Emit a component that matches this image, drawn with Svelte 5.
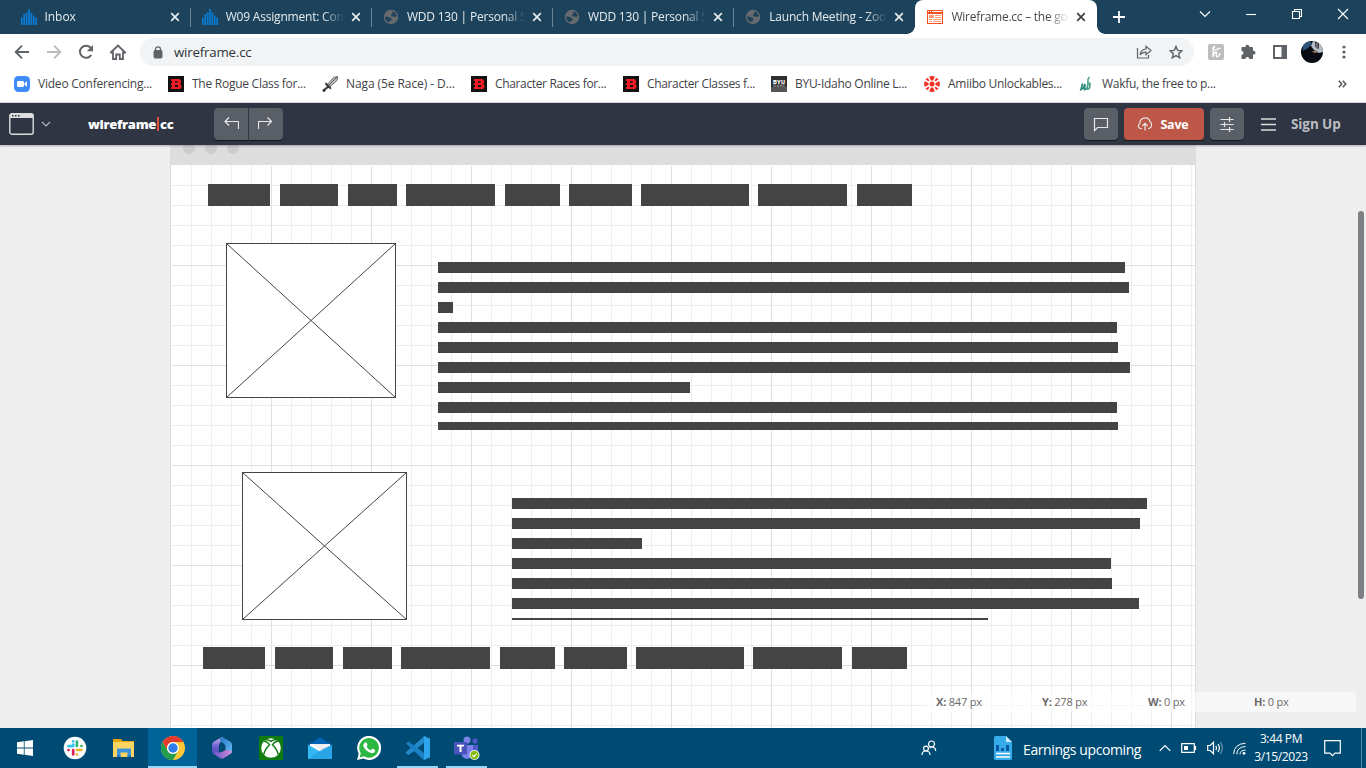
<script>
  const tabs = [
    { title: 'Inbox', icon: 'bars', s: -0.05 },
    { title: 'W09 Assignment: Complete', icon: 'bars', s: -0.2 },
    { title: 'WDD 130 | Personal Site', icon: 'globe', s: -0.2 },
    { title: 'WDD 130 | Personal Site', icon: 'globe', s: -0.2 },
    { title: 'Launch Meeting - Zoom', icon: 'globe', s: -0.2 },
    { title: 'Wireframe.cc – the go-to', icon: 'wire', active: true, s: -0.25 }
  ];
  const bookmarks = [
    { t: 'Video Conferencing...', i: 'zoom', w: 154, s: -0.22 },
    { t: 'The Rogue Class for...', i: 'b', w: 154, s: -0.26 },
    { t: 'Naga (5e Race) - D...', i: 'sword', w: 149, s: -0.08 },
    { t: 'Character Races for...', i: 'b', w: 152, s: -0.35 },
    { t: 'Character Classes f...', i: 'b', w: 148, s: -0.35 },
    { t: 'BYU-Idaho Online L...', i: 'byu', w: 153, s: -0.28 },
    { t: 'Amiibo Unlockables...', i: 'ign', w: 154, s: -0.28 },
    { t: 'Wakfu, the free to p...', i: 'wakfu', w: 150, s: -0.28 }
  ];
  const nav = [[0, 62], [72, 58], [140, 49], [198, 89], [297, 55], [361, 63], [433, 108], [550, 89], [649, 55]];
  const paraA = [687, 691, 15, 679, 680, 692, 252, 679, 680];
  const paraB = [635, 628, 130, 599, 600, 627, 476];
  const coords = [['X:', '847 px'], ['Y:', '278 px'], ['W:', '0 px'], ['H:', '0 px']];
  const apps = ['start', 'slack', 'files', 'chrome', 'm365', 'xbox', 'mail', 'whatsapp', 'code', 'teams'];
</script>

{#snippet icon(name)}
  {#if name === 'bars'}
    <svg width="16" height="16" viewBox="0 0 16 16" fill="#0b7ad1"><path d="M0 8.5h1.7V16H0zM2.4 5h1.7v11H2.4zM4.8 3.5h1.7V16H4.8zM7.1 0h1.8v16H7.1zM9.5 3.5h1.7V16H9.5zM11.9 6.5h1.7V16h-1.7zM14.3 8.5H16V16h-1.7z" /></svg>
  {:else if name === 'globe'}
    <svg width="16" height="16" viewBox="0 0 16 16"><circle cx="8" cy="8" r="7.200" fill="#676b6f" /><path d="M2 7.500l3 .2 2.200 1.100 1.600 1-.6 1.600-1.700.5-.3 1.600C3.700 12.500 2 10.500 2 7.500zM9 2.200l3.200 1.300 1.600 3.300-1.500 1.400-1.800-.9-1.700.5L8 6.500l.4-1.400 1.200-.6z" fill="#1d4259" /></svg>
  {:else if name === 'wire'}
    <svg width="16" height="14" viewBox="0 0 16 14"><path fill="#f4511e" d="M0 0h16v14H0z" /><path fill="#fff" d="M1 1h1v1H1zM3 1h1v1H3zM5 1h10v1H5zM1 4h14v9H1z" /><path fill="#ff9c73" d="M2 5h5v3H2zM8 5h6v1H8zM8 7h6v1H8zM2 9h3v1H2zM6 9h8v1H6zM2 11h3v1H2zM6 11h8v1H6z" /></svg>
  {:else if name === 'zoom'}
    <svg width="16" height="16" viewBox="0 0 16 16"><rect width="16" height="16" rx="4.500" fill="#3f8cf7" /><rect x="3" y="5" width="7" height="6" rx="1.300" fill="#fff" /><path d="M10.500 7.200 13 5.300v5.400l-2.500-1.900z" fill="#fff" /></svg>
  {:else if name === 'b'}
    <svg width="16" height="16" viewBox="0 0 16 16"><path fill="#111" d="M0 0h16v16H0z" /><path fill="#ed1c24" fill-rule="evenodd" d="M3 3h8.500L13 4.500v2L12.200 8l1.300 1.500v2.200L12 13H3v-2h1V9H2.500V7.500H4V5H3zM7 5.200v1.600h2.500V5.200zM7 9v2h3V9z" /></svg>
  {:else if name === 'sword'}
    <svg width="16" height="16" viewBox="0 0 16 16"><path d="M15.700.4 15 4.500 7.600 11 5.300 8.700l6.200-7.300z" fill="#bcbcbc" stroke="#555" stroke-width=".8" /><path d="M15 1 6.500 9.500" stroke="#666" /><path d="m3 6.500 1.800.5L9 11.200l.2 2.300-2-1L3.500 9zM5 10.300l1.500 1.500L2.500 15 1 13.700z" fill="#3c3a38" /><circle cx="2" cy="14.500" r="1.400" fill="#2e2d2c" /></svg>
  {:else if name === 'byu'}
    <svg width="16" height="16" viewBox="0 0 16 16"><path fill="#303030" d="M0 0h16v16H0z" /><path fill="#555" d="M0 11h16v5H0z" /><text x="8" y="7.800" text-anchor="middle" font-family="Roboto" font-weight="900" font-size="6" fill="#fff" textLength="12">BYU</text><text x="8" y="11.300" text-anchor="middle" font-family="Roboto" font-size="3.500" fill="#ccc" textLength="12">IDAHO</text></svg>
  {:else if name === 'ign'}
    <svg width="16" height="16" viewBox="0 0 16 16" fill="#ee3124"><circle cx="8" cy="8" r="2.500" /><path d="M5.300.8Q8-.6 10.700.8L9.100 4.500H6.900zM5.300 15.200q2.700 1.400 5.400 0l-1.600-3.700H6.900zM.8 5.300Q-.6 8 .8 10.700l3.700-1.600V6.900zM15.200 5.300q1.400 2.700 0 5.400l-3.700-1.600V6.900z" /><path d="m2 3.500 1.500-1.500L5 4.800 4.800 5zM14 3.500 12.500 2 11 4.800l.2.200zM2 12.500 3.500 14 5 11.200l-.2-.2zM14 12.500 12.500 14 11 11.200l.2-.2z" stroke="#ee3124" stroke-width=".8" /></svg>
  {:else if name === 'wakfu'}
    <svg width="16" height="16" viewBox="0 0 16 16" fill="none" stroke-linecap="round"><path d="M4.500 8 3 13.500 5.500 12 7 8l-.5 5.500L9 12.800" stroke="#2b8a7c" stroke-width="1.700" /><path d="M11 1.500C8.500 4 10.500 7 10 8.500L8.700 13c2.800 1 3.600-2.700 3.100-6" stroke="#4da08a" stroke-width="1.700" /></svg>
  {:else if name === 'start'}
    <svg width="16" height="16" viewBox="0 0 16 16" fill="#fff"><path d="M0 2.300 6.800 1.300v6.200H0zM7.600 1.200 16 0v7.500H7.600zM0 8.400h6.800v6.300L0 13.700zM7.600 8.400H16V16l-8.400-1.200z" /></svg>
  {:else if name === 'slack'}
    <svg width="24" height="24" viewBox="0 0 24 24"><circle cx="12" cy="12" r="11.300" fill="#fff" /><g stroke-width="2.700" stroke-linecap="round"><path d="M10.200 5.300v.2M10.200 8.600v1.300M5.500 10.100h4.600" stroke="#36c5f0" /><path d="M13.900 5.500V10M18.400 10h.1" stroke="#2eb67d" /><path d="M13.900 18.600v-.1M13.900 14h4.600" stroke="#ecb22e" /><path d="M10.200 18.500V14M5.500 14h.1" stroke="#e01e5a" /></g></svg>
  {:else if name === 'files'}
    <svg width="24" height="24" viewBox="0 0 24 24"><path fill="#e5a50f" d="M1 3h8l1.500 2H22v3H1z" /><path fill="#fcd462" d="M1 6h21v15H1z" /><path fill="#3d93dd" d="M5 12.500h14V21h-3.500v-4.500h-7V21H5z" /><path fill="#237ac4" d="M5 19h3.500v2H5zM15.500 19H19v2h-3.500z" /></svg>
  {:else if name === 'chrome'}
    <svg width="24" height="24" viewBox="0 0 24 24"><circle cx="12" cy="12" r="12" fill="#fcc934" /><path d="M1.600 6A12 12 0 0 1 22.400 6H12a6 6 0 0 0-5.200 9z" fill="#e33b2e" /><path d="M1.600 6A12 12 0 0 0 12 24l5.200-9a6 6 0 0 1-10.400 0z" fill="#229c4f" /><circle cx="12" cy="12" r="6" fill="#fff" /><circle cx="12" cy="12" r="4.700" fill="#2f7de9" /></svg>
  {:else if name === 'm365'}
    <svg width="24" height="24" viewBox="0 0 24 24"><defs><linearGradient id="mA" x1="0" y1="0" x2="0" y2="1"><stop stop-color="#d8b4ee" /><stop offset=".5" stop-color="#6c5fd0" /><stop offset="1" stop-color="#4a42ad" /></linearGradient><linearGradient id="mB" x1="0" y1="0" x2="1" y2="1"><stop stop-color="#2877c9" /><stop offset="1" stop-color="#63bdf2" /></linearGradient><linearGradient id="mC"><stop stop-color="#6a55cc" /><stop offset="1" stop-color="#d28ad8" /></linearGradient></defs><path d="M12 1 4 5.500Q2 6.700 2 9v6q0 2 2 3.200L7 20q2 0 2-3V9q0-2 2-3.200L14.500 3Z" fill="url(#mA)" /><path d="M10 2q2-1.300 4 0l6 3.500q2 1.200 2 3.500v6q0 2-2 3.200l-5-3V10q0-2-2-3l-3-1.800Z" fill="url(#mB)" /><path d="m3 17.500 7 4.500q2 1 4 0l6-3.800q2-1.200 2-3.200l-7-1.500L11 16q-2 1-4 0l-2-1z" fill="url(#mC)" /><path d="m12 8 3.500 2v4L12 16l-3-1.700V9.700z" fill="#004b73" /></svg>
  {:else if name === 'xbox'}
    <svg width="24" height="24" viewBox="0 0 24 24"><rect width="24" height="24" rx="1.500" fill="#107c10" /><circle cx="12" cy="12" r="9.800" fill="#fff" /><path d="M4.900 5.200Q8 5 10.600 8.800 5.800 13.500 4.700 18.700M19.100 5.200Q16 5 13.400 8.800 18.200 13.500 19.300 18.700M6.500 3.800Q9.500 3.300 12 5.300q2.500-2 5.500-1.500" fill="none" stroke="#107c10" stroke-width="1.500" /></svg>
  {:else if name === 'mail'}
    <svg width="24" height="24" viewBox="0 0 24 24"><path fill="#0563b6" d="M0 9 12 1l12 8v5H0z" /><path fill="#fff" d="M2 8h20v8H2z" /><path fill="#ddd" d="M5 8h17l-9 7z" opacity=".5" /><path fill="#34b8f2" d="m0 8.500 12 7 12-7V23H0z" /><path fill="#198ed8" d="m0 23 12-8.500 4-2.300L24 8.500V23z" opacity=".45" /></svg>
  {:else if name === 'whatsapp'}
    <svg width="24" height="24" viewBox="0 0 24 24"><path d="m0 24 1.700-6.200A12 12 0 1 1 6.300 22.400z" fill="#fff" /><path d="m2.600 21.400 1.200-4.200A9.800 9.800 0 1 1 7 20.300z" fill="#2bb741" /><path d="M8 6.500c.6-.4 1.400-.4 1.700.3l.8 1.900c.1.400 0 .7-.9 1.700 1 2 2.300 3.100 4.300 3.900l1.200-1.400c.3-.3.6-.2 2.700.9.500.3.300 1.500-.1 2.100-.8 1-2.300 1.400-3.600 1-4.100-1.200-6.700-3.800-7.700-6.700-.5-1.500.4-3 1.600-3.700" fill="#fff" /></svg>
  {:else if name === 'code'}
    <svg width="24" height="24" viewBox="0 0 24 24"><path d="m18 0 6 2.700v18.600L18 24 8.500 14.800 2.500 19 0 17.500v-1.600L14.500 3.500zM18 6.700 11.500 12 18 17.300z" fill="#2489ca" fill-rule="evenodd" /><path d="m0 7.500 2.500-1.900L18 17.300V24l-1-.5z" fill="#1b7fc4" /><path d="m18 0 6 2.700v18.600L18 24z" fill="#2ca5ec" /></svg>
  {:else if name === 'teams'}
    <svg width="26" height="24" viewBox="0 0 26 24"><circle cx="13" cy="4" r="3.500" fill="#7b83eb" /><circle cx="21" cy="5" r="2.600" fill="#5059c9" /><path d="M17 9h7v8a4 4 0 0 1-6 3z" fill="#5059c9" /><path d="M8 9h11v8a6 6 0 0 1-11 3z" fill="#7b83eb" /><rect y="6" width="13" height="12.500" rx="1" fill="#4b53bc" /><path d="M3 8.700h7v1.800H7.500V16h-2v-5.500H3z" fill="#fff" /><circle cx="20.500" cy="19" r="5" fill="#fff" /><circle cx="20.500" cy="19" r="4.200" fill="#83bc0b" /><path d="m18.300 19.200 1.500 1.500 3-3" fill="none" stroke="#fff" stroke-width="1.100" /></svg>
  {/if}
{/snippet}

{#snippet cross(w, h)}
  <svg width={w} height={h} viewBox="0 0 {w} {h}"><rect x=".5" y=".5" width={w - 1} height={h - 1} fill="#fff" stroke="#444" /><path d="M.5.5 {w - 0.5} {h - 0.5}M{w - 0.5} .5.5 {h - 0.5}" stroke="#444" fill="none" /></svg>
{/snippet}

<div class="screen">
  <div class="tabstrip">
    <div class="tabs">
      {#each tabs as tab, i}
        <div class="tab" class:active={tab.active} class:sep={i < 4}>
          <span class="fav">{@render icon(tab.icon)}</span>
          <span class="title" style:letter-spacing="{tab.s}px">{tab.title}</span>
          <svg class="close" width="10" height="10" viewBox="0 0 10 10"><path d="m1.200 1.200 7.600 7.600M8.800 1.200 1.200 8.800" stroke="currentColor" stroke-width="1.700" /></svg>
        </div>
      {/each}
    </div>
    <svg class="plus" width="12" height="12" viewBox="0 0 12 12"><path d="M6 0v12M0 6h12" stroke="#fff" stroke-width="1.800" /></svg>
    <div class="winctl">
      <svg width="12" height="12" viewBox="0 0 12 12"><path d="m1 3.500 5 5 5-5" /></svg>
      <svg width="12" height="12" viewBox="0 0 12 12"><path d="M1 6.500h10" /></svg>
      <svg width="12" height="12" viewBox="0 0 12 12"><path d="M1.500 3.500h7v7h-7zM3.500 3.500v-2h7v7h-2" /></svg>
      <svg width="12" height="12" viewBox="0 0 12 12"><path d="m1 1 10 10M11 1 1 11" /></svg>
    </div>
  </div>

  <div class="toolbar">
    <div class="navbtns">
      <svg width="16" height="16" viewBox="0 0 16 16"><path d="M15 8H2M8 1.700 1.700 8 8 14.300" stroke="#5f6368" stroke-width="1.900" fill="none" /></svg>
      <svg width="16" height="16" viewBox="0 0 16 16"><path d="M1 8h13M8 1.700 14.300 8 8 14.300" stroke="#babcbe" stroke-width="1.900" fill="none" /></svg>
      <svg width="16" height="16" viewBox="0 0 16 16"><path d="M13.200 11a6.100 6.100 0 1 1-.6-7.300L14 5.500" stroke="#5f6368" stroke-width="2" fill="none" /><path d="M15 1v6.200H8.800z" fill="#5f6368" /></svg>
      <svg width="16" height="16" viewBox="0 0 16 16"><path d="M.8 8.500 8 1.500l7.200 7H13V15H9.800v-4.500H6.200V15H3V8.500z" stroke="#5f6368" stroke-width="1.800" fill="none" /></svg>
    </div>
    <div class="omnibox">
      <svg width="10" height="13" viewBox="0 0 10 13"><rect x="1" y="4.500" width="8" height="7.500" rx="1" fill="#5f6368" stroke="#5f6368" /><path d="M2.500 5V3.300a2.500 2.500 0 0 1 5 0V5" fill="none" stroke="#5f6368" stroke-width="1.300" /></svg>
      <span class="url">wireframe.cc</span>
      <svg class="share" width="16" height="16" viewBox="0 0 16 16" fill="none" stroke="#5f6368" stroke-width="1.200"><path d="M1.500 4v10h11v-3M4 11c.6-4 3-5.800 6-6V2.300l5 4.200-5 4.200V8.200c-2.500 0-4.500.8-6 2.800z" /></svg>
      <svg width="14" height="14" viewBox="0 0 14 14" fill="none" stroke="#5f6368" stroke-width="1.400"><path d="m7 1.500 1.700 3.900 4.200.4-3.200 2.800 1 4.200L7 10.600l-3.700 2.200 1-4.200L1.100 5.800l4.200-.4z" /></svg>
    </div>
    <div class="ext">
      <svg width="16" height="16" viewBox="0 0 16 16"><rect width="16" height="16" rx="2" fill="#bdbdbd" /><path d="M4 4.500C6 4.500 7 3 6.500 2.300S4.800 5 5 13c.8-3 2-5 3.200-5s-.7 3.500.3 4.500S11 12 12.200 9M6.500 6.200 12.500 4" fill="none" stroke="#fff" stroke-width="1.300" /></svg>
      <svg width="16" height="16" viewBox="0 0 16 16" fill="#5f6368"><path d="M5.500 3V2.600a1.900 1.900 0 0 1 3.800 0V3H12c.6 0 1 .4 1 1v2.800h.6a1.900 1.900 0 0 1 0 3.800H13V14c0 .6-.4 1-1 1H9.400a2 2 0 0 0-4 0H2.500c-.6 0-1-.4-1-1v-2.900a2 2 0 0 0 0-4V4c0-.6.400-1 1-1z" /></svg>
      <svg width="14" height="14" viewBox="0 0 14 14"><path fill="#5f6368" fill-rule="evenodd" d="M0 0h14v14H0zM2 2v10h6.500V2z" /></svg>
      <svg class="avatar" width="22" height="22" viewBox="0 0 22 22"><defs><clipPath id="av"><circle cx="11" cy="11" r="11" /></clipPath></defs><g clip-path="url(#av)"><path fill="#080b12" d="M0 0h22v22H0z" /><path fill="#2d527c" d="M2 3 9 0l2 3-4 4-5 3z" /><path fill="#b4bec8" d="m12 0 2 0 .5 6 3 2 .5-6 4 4v5l-4 1-5-3-3-4z" /><path fill="#6d6a6a" d="m14.500 1 3 1-.5 6-2-1z" /><path fill="#94755c" d="m11 10 5 0 1 1.500-4 .5z" /></g></svg>
      <svg width="4" height="14" viewBox="0 0 4 14" fill="#5f6368"><circle cx="2" cy="2" r="1.600" /><circle cx="2" cy="7" r="1.600" /><circle cx="2" cy="12" r="1.600" /></svg>
    </div>
  </div>

  <div class="bookmarks">
    {#each bookmarks as b}
      <div class="bm" style:width="{b.w}px">
        {@render icon(b.i)}<span style:letter-spacing="{b.s}px">{b.t}</span>
      </div>
    {/each}
    <svg class="more" width="9" height="8" viewBox="0 0 9 8"><path d="m.8.800 3 3.200-3 3.200M4.800.800l3 3.200-3 3.200" fill="none" stroke="#505356" stroke-width="1.500" /></svg>
  </div>

  <header class="app">
    <svg class="frame" width="25" height="22" viewBox="0 0 25 22"><rect x=".8" y=".8" width="23.400" height="20.400" rx="2" fill="none" stroke="#dcdcdc" stroke-width="1.400" /><path d="M1 1h23v4H1z" fill="#dcdcdc" /><path d="M3 2h1.500v1.500H3zM6 2h1.500v1.500H6zM9 2h1.500v1.500H9z" fill="#2f3542" /></svg>
    <svg class="chev" width="10" height="6" viewBox="0 0 10 6"><path d="m1 1 4 4 4-4" fill="none" stroke="#bbb" stroke-width="1.100" /></svg>
    <div class="logo">wireframe<i></i>cc</div>
    <div class="undo">
      <button aria-label="Undo"><svg width="16" height="16" viewBox="0 0 16 16"><path d="M6 1.500 2 5.500l4 4M2 5.500h13.500V13" /></svg></button>
      <button aria-label="Redo"><svg width="16" height="16" viewBox="0 0 16 16"><path d="m9.500 1.500 4 4-4 4M13.500 5.500H.5V13" /></svg></button>
    </div>
    <div class="actions">
      <button aria-label="Comments"><svg width="16" height="16" viewBox="0 0 16 16"><path d="M1.500 2.500h13v9h-10l-3 3z" /></svg></button>
      <button class="save"><svg width="16" height="16" viewBox="0 0 16 16"><path d="M5 12.500H3.200A2.800 2.800 0 0 1 2.900 7.500 5.200 5.200 0 0 1 13 5.500 4 4 0 0 1 12 12.500h-1M8 14.500v-7M5.300 10 8 7.300l2.700 2.700" /></svg><span>Save</span></button>
      <button aria-label="Settings"><svg width="16" height="16" viewBox="0 0 16 16"><path d="M1.500 3.500h13M1.500 8.500h13M1.500 13.500h13M10.500 1v5M5.500 6v5M10.500 11v5" /></svg></button>
    </div>
    <svg class="burger" width="15" height="13" viewBox="0 0 15 13"><path d="M0 1h15M0 6.500h15M0 12h15" stroke="#ddd" stroke-width="1.500" /></svg>
    <span class="signup">Sign Up</span>
  </header>

  <main>
    <section class="window">
      <div class="wtop"><i></i><i></i><i></i></div>
      <div class="paper">
        {#each [[37, 18], [32, 481]] as [x, y]}
          <div class="wnav" style:left="{x}px" style:top="{y}px">
            {#each nav as [l, w]}
              <b style:left="{l}px" style:width="{w}px"></b>
            {/each}
          </div>
        {/each}
        <div class="ph one">{@render cross(170, 155)}</div>
        <div class="ph two">{@render cross(165, 148)}</div>
        <div class="para a">
          {#each paraA as w}<b style:width="{w}px"></b>{/each}
        </div>
        <div class="para b">
          {#each paraB as w}<b style:width="{w}px"></b>{/each}
        </div>
      </div>
    </section>
    <div class="scroll"></div>
    <div class="coords">
      {#each coords as [k, v]}<span><b>{k}</b> {v}</span>{/each}
    </div>
  </main>

  <footer>
    <div class="apps">
      {#each apps as a, i}
        <div class="cell" class:on={a === 'chrome'} class:run={i > 7}>{@render icon(a)}</div>
      {/each}
    </div>
    <svg class="people" width="16" height="16" viewBox="0 0 16 16" fill="none" stroke="#fff" stroke-width="1.200"><circle cx="10.500" cy="4" r="3" /><circle cx="5" cy="8.500" r="2.400" /><path d="M1 15c0-2.500 1.700-4 4-4s4 1.500 4 4M8.500 8.300C9 7.400 9.800 7 10.700 7c2.500 0 4 1.700 4 4" /></svg>
    <div class="news">
      <svg width="18" height="24" viewBox="0 0 18 24"><path d="M1.500 0H12l6 6v16.500a1.500 1.500 0 0 1-1.500 1.500h-15A1.500 1.500 0 0 1 0 22.500v-21A1.500 1.500 0 0 1 1.500 0z" fill="#35abea" /><path d="m12 0 6 6h-6z" fill="#c9edff" /><path d="M2 9h3v6H2zM7 12h3v3H7zM12 9h3v6h-3z" fill="#0b58a5" /><path d="M2 17.500h14M2 21h14" stroke="#fff" stroke-width="1.500" /></svg>
      <span>Earnings upcoming</span>
    </div>
    <div class="tray">
      <svg width="12" height="8" viewBox="0 0 12 8"><path d="m.7 6.800 5.300-5.300 5.300 5.300" /></svg>
      <svg width="16" height="10" viewBox="0 0 16 10"><path d="M.7.700h12.600v8.600H.7zM14.500 3v4" /><path d="M3 3h4v4H3z" fill="#fff" stroke="none" /></svg>
      <svg width="16" height="14" viewBox="0 0 16 14"><path d="M.7 4.500h2.500L6.500 1.300v11.400L3.200 9.500H.7zM8.700 4.800q1.600 2.200 0 4.400M11 3q2.800 4 0 8" /><path d="M13.300 1.200q4 5.800 0 11.600" opacity=".4" /></svg>
      <svg width="13" height="13" viewBox="0 0 13 13"><path d="M.7 12Q1 2 12.500 1.200M3.800 12.300Q4 5 12.500 4.500M7 12.300q0-4 5.500-4.300" stroke-width="1" /><circle cx="11" cy="11.300" r="1.400" fill="#fff" stroke="none" /></svg>
    </div>
    <div class="clock"><span>3:44 PM</span><span>3/15/2023</span></div>
    <svg class="notif" width="17" height="17" viewBox="0 0 17 17"><path d="M.7.700h15.600v12.500H11L8.500 15.700 6 13.200H.7z" fill="none" stroke="#fff" stroke-width="1.200" /></svg>
    <div class="desk"></div>
  </footer>
</div>

<style>
  :global(body) { margin: 0; overflow: hidden; }
  .screen { width: 1366px; height: 768px; display: flex; flex-direction: column; overflow: hidden; font-family: "Open Sans", "Noto Sans", sans-serif; font-size: 12px; }
  .screen * { box-sizing: border-box; }
  svg { display: block; flex: none; }
  .tabstrip { height: 34px; background: #1c435b; display: flex; flex: none; }
  .tabs { display: flex; padding-left: 9.500px; width: 1097px; }
  .tab { width: 181.200px; height: 34px; display: flex; align-items: center; padding: 0 11px 0 11px; color: #e6ebee; position: relative; flex: none; }
  .tab.sep::after { content: ""; position: absolute; right: 0; top: 8px; width: 1px; height: 19px; background: #6b8493; }
  .fav { width: 16px; margin-right: 8px; }
  .title { flex: 1; min-width: 0; white-space: nowrap; overflow: hidden; margin: -1px 7px 0 0; -webkit-mask-image: linear-gradient(90deg, #000 82%, transparent); mask-image: linear-gradient(90deg, #000 82%, transparent); }
  .close { color: #e6ebee; }
  .tab.active { background: #fff; border-radius: 8px 8px 0 0; color: #45494d; padding-left: 12px; }
  .active .close { color: #3c4043; }
  .active::before { content: ""; position: absolute; left: -8px; right: -8px; bottom: 0; height: 8px; background: radial-gradient(circle at 0 0, transparent 7.500px, #fff 8px) left / 8px 8px no-repeat, radial-gradient(circle at 100% 0, transparent 7.500px, #fff 8px) right / 8px 8px no-repeat; }
  .plus { margin: 11px 0 0 16px; }
  .winctl { display: flex; gap: 34px; margin: 8px 0 0 74px; fill: none; stroke: #fff; stroke-width: 1.100; }
  .toolbar { height: 36px; display: flex; align-items: center; background: #fff; flex: none; }
  .navbtns { display: flex; gap: 16px; padding-left: 14px; width: 140px; }
  .omnibox { width: 1054px; height: 28px; border-radius: 14px; background: #f1f3f4; display: flex; align-items: center; padding: 0 11px 0 13px; }
  .url { margin-left: 11px; font-size: 13.300px; color: #303438; letter-spacing: -.2px; flex: 1; }
  .share { margin-right: 17px; }
  .ext { display: flex; align-items: center; padding-left: 14px; gap: 16px; }
  .ext svg:nth-child(3) { margin-left: 1px; }
  .avatar { margin: 0 3px 0 -2px; }
  .bookmarks { height: 33px; background: #fff; border-bottom: 1px solid #dadce0; display: flex; align-items: center; padding: 0 19px 5px 14px; flex: none; color: #3f4347; }
  .bm { display: flex; gap: 8px; align-items: center; white-space: nowrap; flex: none; }
  .more { margin-left: auto; }
  .app { height: 42px; background: #2f3542; display: flex; align-items: center; padding: 0 24px 0 9px; flex: none; z-index: 1; box-shadow: 0 1px 2px #0004; }
  .chev { margin-left: 7px; }
  .logo { display: flex; align-items: center; width: 126px; margin-left: 37px; color: #fff; font-weight: 800; font-size: 13px; letter-spacing: -.3px; }
  .logo i { width: 2px; height: 14px; background: #e0513f; margin: 0 1px; flex: none; }
  button { border: 0; padding: 0; margin: 0; font: inherit; color: #fff; width: 34px; height: 32px; background: #5a5e67; border-radius: 4px; box-shadow: 0 1px 0 #14161a; display: flex; align-items: center; justify-content: center; }
  button svg { fill: none; stroke: #e6e6e6; stroke-width: 1.200; }
  .undo { display: flex; gap: 1px; }
  .undo button:first-child { border-radius: 4px 0 0 4px; }
  .undo button:last-child { border-radius: 0 4px 4px 0; }
  .actions { display: flex; gap: 6px; margin-left: auto; }
  .save { width: 80px; background: #bd5848; font-weight: 700; font-size: 12.500px; gap: 7px; letter-spacing: -.2px; padding-right: 2px; }
  .burger { margin-left: 17px; }
  .signup { color: #bbbdc1; font-weight: 700; font-size: 13.500px; letter-spacing: -.1px; width: 51px; margin-left: 15px; white-space: nowrap; }
  main { height: 583px; background: #eee; flex: none; position: relative; display: flex; overflow: hidden; }
  .window { width: 1026px; height: 583px; margin-left: 170px; }
  .wtop { height: 20px; background: #ddd; display: flex; gap: 10px; padding-left: 13px; }
  .wtop i { width: 12px; height: 12px; border-radius: 50%; background: #ccc; margin-top: -3px; }
  .paper { height: 563px; border: solid #ddd; border-width: 0 1px; position: relative; background-color: #fff;
    background-image: linear-gradient(#fff, #fff), linear-gradient(90deg, #e0e0e0 1px, transparent 1px), linear-gradient(#e0e0e0 1px, transparent 1px), linear-gradient(90deg, #eee 1px, transparent 1px), linear-gradient(#eee 1px, transparent 1px);
    background-size: 100% 1px, 100px 100px, 100px 100px, 20px 20px, 20px 20px; background-position: 0 0, 100px 0, 0 100px, 0 0, 0 0; background-repeat: no-repeat, repeat, repeat, repeat, repeat; }
  .paper::before { content: ""; position: absolute; left: 0; top: 0; width: 1px; height: 100%; background: #fff; }
  .wnav { position: absolute; height: 23px; width: 704px; }
  .wnav b { position: absolute; top: 1px; height: 22px; background: #444; }
  .ph, .para { position: absolute; }
  .one { left: 55px; top: 78px; }
  .two { left: 71px; top: 307px; }
  .para { display: flex; flex-direction: column; gap: 9px; overflow: hidden; }
  .para b { height: 11px; background: #444; flex: none; }
  .para.a { left: 267px; top: 97px; height: 168px; }
  .para.b { left: 341px; top: 333px; height: 122px; }
  .scroll { position: absolute; left: 1358px; top: 66px; width: 6px; height: 388px; border-radius: 3px; background: #7d8085; }
  .coords { position: absolute; left: 926px; top: 547px; width: 430px; height: 20px; background: #ffffff80; display: flex; align-items: center; padding: 0 0 1px 10px; font-size: 11px; color: #6b6b6b; letter-spacing: -.2px; }
  .coords span { width: 106px; flex: none; }
  footer { height: 40px; background: #004b73; display: flex; align-items: center; flex: none; color: #fff; }
  .apps { display: flex; width: 918px; }
  .cell { width: 49px; height: 40px; display: flex; align-items: center; justify-content: center; position: relative; left: 1px; }
  .cell:first-child { left: 0; }
  .cell.on { background: #00639a; }
  .cell.on::after, .cell.run::after { content: ""; position: absolute; left: 4px; right: 4px; bottom: 0; height: 2px; background: #99d6f7; }
  .cell.on::after { left: 0; right: 0; }
  .people { margin-left: 3px; }
  .news { display: flex; align-items: center; gap: 11px; margin-left: 57px; width: 165px; font-size: 14px; letter-spacing: -.4px; white-space: nowrap; }
  .news span { margin-top: 2px; }
  .tray { display: flex; align-items: center; gap: 10px; fill: none; stroke: #fff; stroke-width: 1.200; width: 89px; }
  .tray svg { flex: none; }
  .clock { display: flex; flex-direction: column; align-items: center; font-size: 12px; line-height: 18px; width: 66px; letter-spacing: -.38px; }
  .notif { margin-left: 10px; }
  .desk { margin-left: auto; width: 5px; height: 40px; border-left: 1px solid #5a88a3; }
</style>
